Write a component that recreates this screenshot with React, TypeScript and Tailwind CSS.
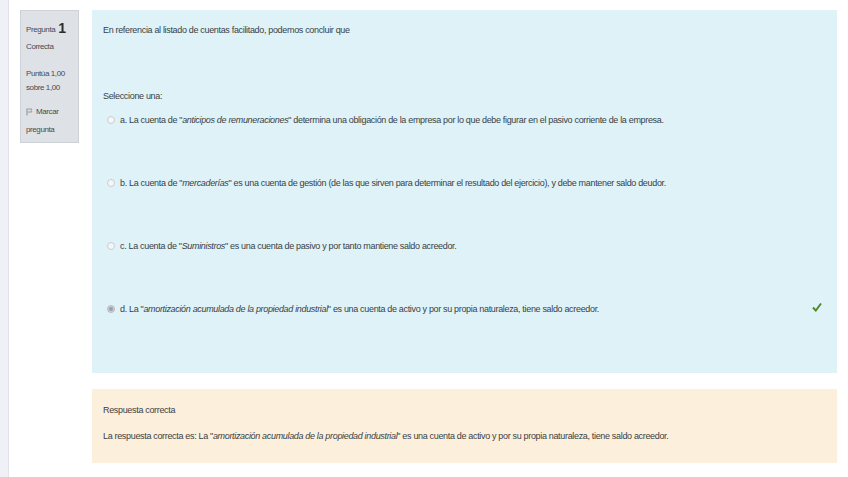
import React from 'react';

const font = { fontFamily: '"Liberation Sans", Arial, sans-serif' };

const Radio = ({ checked = false }: { checked?: boolean }) => (
  <span
    className={`inline-block w-[8px] h-[8px] rounded-full border mr-[5px] shrink-0 ${
      checked ? 'border-[#b9bec4] bg-[#c9cdd2]' : 'border-[#c8cdd2] bg-[#f4f6f8]'
    }`}
  >
    {checked && <span className="block w-[4px] h-[4px] m-[1px] rounded-full bg-[#9aa0a6]" />}
  </span>
);

const options = [
  {
    key: 'a',
    before: 'a. La cuenta de "',
    em: 'anticipos de remuneraciones',
    after: '" determina una obligación de la empresa por lo que debe figurar en el pasivo corriente de la empresa.',
  },
  {
    key: 'b',
    before: 'b. La cuenta de "',
    em: 'mercaderías',
    after: '" es una cuenta de gestión (de las que sirven para determinar el resultado del ejercicio), y debe mantener saldo deudor.',
  },
  {
    key: 'c',
    before: 'c. La cuenta de "',
    em: 'Suministros',
    after: '" es una cuenta de pasivo y por tanto mantiene saldo acreedor.',
  },
  {
    key: 'd',
    before: 'd. La "',
    em: 'amortización acumulada de la propiedad industrial',
    after: '" es una cuenta de activo y por su propia naturaleza, tiene saldo acreedor.',
    checked: true,
  },
];

export default function App() {
  return (
    <div className="flex w-[848px] h-[477px] bg-white text-[#3a3f44]" style={font}>
      {/* left drawer strip */}
      <div className="w-[9px] h-full bg-[#f0f1f6] border-r border-[#e1e3e8]" />

      <div className="flex pl-[11px] pt-[10px]">
        {/* question info */}
        <div className="w-[59px] h-[133px] bg-[#dee2e6] border border-[#cdd2d8] px-[5px] pt-[10px] text-[8px] leading-[10px] tracking-[-0.4px] text-[#464b50]">
          <div className="flex items-end h-[14px]">
            Pregunta <span className="ml-[3px] text-[14px] leading-[14px] font-bold text-[#2a2f34]">1</span>
          </div>
          <div className="mt-[7px]">Correcta</div>
          <div className="mt-[15px] leading-[14px]">
            Puntúa 1,00
            <br />
            sobre 1,00
          </div>
          <div className="mt-[9px] leading-[16px]">
            <span className="inline-flex items-center">
              <svg width="7" height="8" viewBox="0 0 7 8" className="mr-[3px]">
                <path d="M1 0.5V7.5" stroke="#8a9096" strokeWidth="1" />
                <path d="M1.5 1H6L5 2.5L6 4H1.5" fill="none" stroke="#8a9096" strokeWidth="0.8" />
              </svg>
              Marcar
            </span>
            <br />
            pregunta
          </div>
        </div>

        {/* content column */}
        <div className="ml-[13px] w-[745px]">
          <div className="h-[363px] bg-[#def2f8] pl-[11px] pr-[14px] pt-[14px] text-[9px] leading-[12px] tracking-[-0.33px]">
            <div>En referencia al listado de cuentas facilitado, podemos concluir que</div>
            <div className="mt-[54px]">Seleccione una:</div>
            <div className="mt-[12px]">
              {options.map((o) => (
                <div key={o.key} className="flex items-center h-[12px] mb-[51px] pl-[4px]">
                  <Radio checked={o.checked} />
                  <span>
                    {o.before}
                    <em>{o.em}</em>
                    {o.after}
                  </span>
                  {o.checked && (
                    <svg width="10" height="10" viewBox="0 0 10 10" className="ml-auto mr-[1px] -mt-[4px]">
                      <path d="M1 5.5L3.8 8.5L9 1.5" fill="none" stroke="#4f8a2e" strokeWidth="2" />
                    </svg>
                  )}
                </div>
              ))}
            </div>
          </div>

          <div className="mt-[16px] h-[74px] bg-[#fcefdc] pl-[11px] pt-[15px] text-[9px] leading-[12px] tracking-[-0.33px]">
            <div>Respuesta correcta</div>
            <div className="mt-[14px]">
              La respuesta correcta es: La "<em>amortización acumulada de la propiedad industrial</em>" es una cuenta de
              activo y por su propia naturaleza, tiene saldo acreedor.
            </div>
          </div>
        </div>
      </div>
    </div>
  );
}
